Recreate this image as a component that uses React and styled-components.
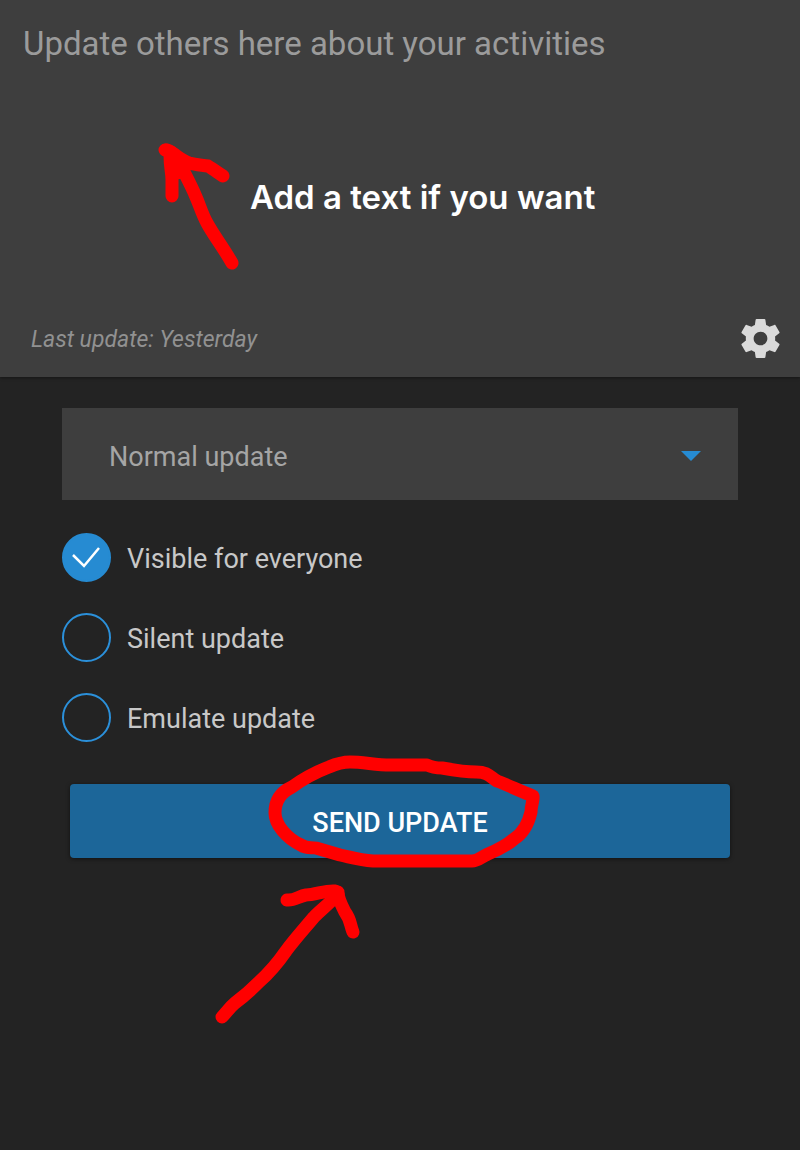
import { useState } from "react";
import styled, { createGlobalStyle } from "styled-components";

const OPTIONS = [
  { id: "visible", label: "Visible for everyone" },
  { id: "silent", label: "Silent update" },
  { id: "emulate", label: "Emulate update" },
];

export default function App() {
  const [text, setText] = useState("");
  const [kind, setKind] = useState("normal");
  const [checked, setChecked] = useState({ visible: true });

  function toggle(id) {
    setChecked({ ...checked, [id]: !checked[id] });
  }

  return (
    <>
      <GlobalStyle />
      <Composer>
        <Message
          aria-label="Update text"
          placeholder="Update others here about your activities"
          value={text}
          onChange={(e) => setText(e.target.value)}
        />
        <ComposerFooter>
          <LastUpdate>Last update: Yesterday</LastUpdate>
          <SettingsButton type="button" aria-label="Settings">
            <GearIcon />
          </SettingsButton>
        </ComposerFooter>
        <TextHint>
          <TextArrow />
          <HintLabel>Add a text if you want</HintLabel>
        </TextHint>
      </Composer>

      <Form onSubmit={(e) => e.preventDefault()}>
        <SelectBox>
          <Select
            aria-label="Update type"
            value={kind}
            onChange={(e) => setKind(e.target.value)}
          >
            <option value="normal">Normal update</option>
            <option value="important">Important update</option>
          </Select>
          <Caret viewBox="0 0 20 10" aria-hidden="true">
            <path d="M0 0H20L10 10Z" />
          </Caret>
        </SelectBox>

        <Options>
          {OPTIONS.map((option) => (
            <Option key={option.id}>
              <Checkbox
                type="checkbox"
                checked={!!checked[option.id]}
                onChange={() => toggle(option.id)}
              />
              <CheckMark viewBox="0 0 49 49" aria-hidden="true">
                <path d="M11 22L22 33L37 15" />
              </CheckMark>
              <OptionLabel>{option.label}</OptionLabel>
            </Option>
          ))}
        </Options>

        <SendArea>
          <SendButton type="submit">SEND UPDATE</SendButton>
          <SendMarker />
        </SendArea>
      </Form>
    </>
  );
}

function GearIcon() {
  return (
    <svg width="47" height="47" viewBox="0 0 24 24" fill="currentColor">
      <path d="M19.43 12.98c.04-.32.07-.64.07-.98s-.03-.66-.07-.98l2.11-1.65c.19-.15.24-.42.12-.64l-2-3.46c-.12-.22-.39-.3-.61-.22l-2.49 1c-.52-.4-1.08-.73-1.69-.98l-.38-2.65C14.46 2.18 14.25 2 14 2h-4c-.25 0-.46.18-.49.42l-.38 2.65c-.61.25-1.17.59-1.69.98l-2.49-1c-.23-.09-.49 0-.61.22l-2 3.46c-.13.22-.07.49.12.64l2.11 1.65c-.04.32-.07.65-.07.98s.03.66.07.98l-2.11 1.65c-.19.15-.24.42-.12.64l2 3.46c.12.22.39.3.61.22l2.49-1c.52.4 1.08.73 1.69.98l.38 2.65c.03.24.24.42.49.42h4c.25 0 .46-.18.49-.42l.38-2.65c.61-.25 1.17-.59 1.69-.98l2.49 1c.23.09.49 0 .61-.22l2-3.46c.12-.22.07-.49-.12-.64l-2.11-1.65zM12 15.5c-1.93 0-3.5-1.57-3.5-3.5s1.57-3.5 3.5-3.5 3.5 1.57 3.5 3.5-1.57 3.5-3.5 3.5z" />
    </svg>
  );
}

function TextArrow() {
  return (
    <Ink width="90" height="130" viewBox="150 142 90 130" aria-hidden="true">
      <path d="M165 150C172 150 175 155 180 164C186 176 192 187 196 197C200 206 202 214 207 223C214 236 223 247 232 263" />
      <path d="M170 155C170 168 172 172 172 180V196" />
      <path d="M166 150C175 153 180 160 189 163C196 165 202 165 208 166C213 169 217 172 223 176" />
      <path d="M171 157L186 164L181 172L173 174Z" fill="#f00" />
    </Ink>
  );
}

// circle around the button plus the arrow below it
function SendMarker() {
  return (
    <MarkerInk width="360" height="290" viewBox="200 740 360 290" aria-hidden="true">
      <path d="M275 813C275 801 281 792 292 787C303 779 316 772 329 767C336 764 343 762 350 762C363 762 376 765 390 765H427C431 767 436 768 442 768C453 770 464 772 476 772C489 772 490 777 497 781C508 785 520 791 533 796C534 799 531 805 531 812C528 825 522 834 514 839C506 846 498 850 488 854C481 857 478 861 472 861H373C359 860 350 857 340 855L316 848C311 847 307 849 301 845C286 838 275 824 275 813Z" />
      <path d="M222 1017C226 1013 229 1008 235 1003C243 997 251 990 259 982C268 974 277 964 286 951C294 940 304 929 314 917C321 910 329 904 338 894" />
      <path d="M287 900C294 901 299 896 306 895C315 895 326 890 335 891" />
      <path d="M338 892C338 899 342 906 345 912C351 920 350 925 353 932" />
    </MarkerInk>
  );
}

const GlobalStyle = createGlobalStyle`
  * {
    box-sizing: border-box;
  }
  body {
    margin: 0;
    min-height: 100vh;
    background-color: #232323;
    color: #c8c8c8;
    font-family: Roboto, "Liberation Sans", sans-serif;
  }
  button,
  select,
  textarea {
    font-family: inherit;
  }
`;

const Composer = styled.section`
  position: relative;
  display: flex;
  flex-direction: column;
  background-color: #3e3e3e;
  box-shadow: 0 1px 3px rgba(0, 0, 0, 0.4);
`;

const Message = styled.textarea`
  display: block;
  width: 100%;
  height: 300px;
  padding: 24px 23px;
  border: none;
  outline: none;
  resize: none;
  background: transparent;
  color: #dcdcdc;
  font-size: 33px;
  line-height: 40px;
  &::placeholder {
    color: #9b9b9b;
    opacity: 1;
  }
`;

const ComposerFooter = styled.div`
  display: flex;
  align-items: center;
  justify-content: space-between;
  height: 77px;
  padding: 0 16px 0 31px;
`;

const LastUpdate = styled.span`
  padding-top: 2px;
  color: #919191;
  font-size: 23px;
  font-style: italic;
`;

const SettingsButton = styled.button`
  display: flex;
  padding: 0;
  border: none;
  background: none;
  color: #dadada;
  cursor: pointer;
`;

const TextHint = styled.div`
  position: absolute;
  top: 142px;
  left: 150px;
  display: flex;
  gap: 10px;
  pointer-events: none;
`;

const HintLabel = styled.span`
  padding-top: 35px;
  color: #fff;
  font-family: Inter, sans-serif;
  font-size: 33px;
  font-weight: 600;
  line-height: 40px;
`;

const Ink = styled.svg`
  flex: none;
  fill: none;
  stroke: #f00;
  stroke-width: 13px;
  stroke-linecap: round;
  stroke-linejoin: round;
`;

const Form = styled.form`
  display: flex;
  flex-direction: column;
  padding: 31px 62px;
`;

const SelectBox = styled.div`
  display: grid;
  align-items: center;
  background-color: #3e3e3e;
  & > * {
    grid-area: 1 / 1;
  }
`;

const Select = styled.select`
  appearance: none;
  width: 100%;
  height: 92px;
  padding: 6px 80px 0 47px;
  border: none;
  border-radius: 0;
  outline: none;
  background: transparent;
  color: #a5a5a5;
  font-size: 27px;
`;

const Caret = styled.svg`
  justify-self: end;
  width: 20px;
  height: 10px;
  margin: 4px 37px 0 0;
  fill: #268bd2;
  pointer-events: none;
`;

const Options = styled.div`
  display: flex;
  flex-direction: column;
  align-items: flex-start;
  gap: 31px;
  padding: 33px 0 42px;
`;

const Option = styled.label`
  display: grid;
  grid-template-columns: 49px auto;
  column-gap: 16px;
  align-items: center;
  cursor: pointer;
`;

const Checkbox = styled.input`
  grid-area: 1 / 1;
  appearance: none;
  width: 49px;
  height: 49px;
  margin: 0;
  border: 2px solid #2b90da;
  border-radius: 50%;
  &:checked {
    border-color: #268bd2;
    background-color: #268bd2;
  }
  & + svg {
    visibility: hidden;
  }
  &:checked + svg {
    visibility: visible;
  }
`;

const CheckMark = styled.svg`
  grid-area: 1 / 1;
  width: 49px;
  height: 49px;
  fill: none;
  stroke: #fff;
  stroke-width: 2.5;
  pointer-events: none;
`;

const OptionLabel = styled.span`
  padding-top: 2px;
  font-size: 27px;
  line-height: 32px;
`;

const SendArea = styled.div`
  position: relative;
  padding: 0 8px;
`;

const SendButton = styled.button`
  display: block;
  width: 100%;
  height: 74px;
  padding: 4px 0 0;
  border: none;
  border-radius: 4px;
  background-color: #1c6699;
  box-shadow: 0 1px 4px rgba(0, 0, 0, 0.5);
  color: #fff;
  font-size: 27px;
  font-weight: 500;
  cursor: pointer;
`;

const MarkerInk = styled(Ink)`
  position: absolute;
  top: -44px;
  left: calc(50% - 200px);
  pointer-events: none;
`;
